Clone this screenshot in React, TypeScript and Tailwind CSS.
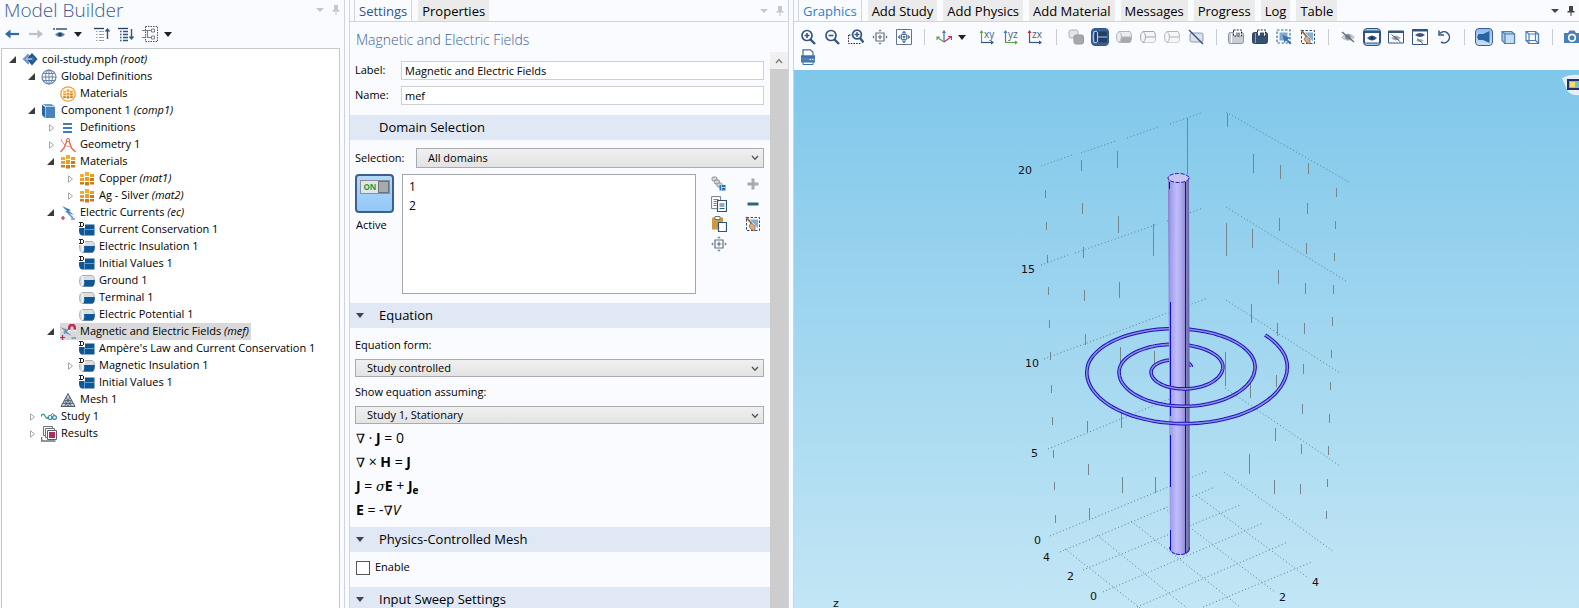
import React from "react";

type IconProps = { children: React.ReactNode; size?: number };

const Icon = ({ children, size = 16 }: IconProps) => (
  <svg width={size} height={size} viewBox="0 0 16 16" fill="none" className="shrink-0" aria-hidden="true">
    {children}
  </svg>
);

const BLUE = "#4a7fb8";
const NAVY = "#34557f";
const GREY = "#9a9fa6";

/* ---------- tree icons ---------- */

const RootIcon = () => (
  <Icon>
    <path d="M10 1 15.500 7 10 13.500 4.500 7Z" fill="#24568f" />
    <path d="M6 1.500 .500 7 6 12.500 8 10.500 4.500 7 8 3.500Z" fill="#6f9ccc" />
    <path d="M4.500 7h6" stroke="#fff" strokeWidth="1" />
    <path d="m10 4 3 3-3 3" fill="#3d73ad" />
  </Icon>
);

const GlobeIcon = () => (
  <Icon>
    <circle cx="8" cy="8" r="7" stroke="#6483ad" strokeWidth="1.2" />
    <ellipse cx="8" cy="8" rx="3.400" ry="7" stroke="#6483ad" />
    <path d="M1 8h14M8 1v14M2.200 4.500h11.600M2.200 11.500h11.600" stroke="#6483ad" />
  </Icon>
);

const Blocks = () => (
  <>
    <path d="M6 1h4v4H6zM1 3h4v3H1z" fill="#f5ad2d" />
    <path d="M11 3h4v3h-4zM1 7h4v3H1zM6 6h4v4H6z" fill="#ee9c22" />
    <path d="M11 7h4v3h-4zM6 11h4v3.500H6zM1 11h4v2.500H1zM11 11h4v2.500h-4z" fill="#cf7b1b" />
  </>
);

const MaterialsIcon = () => (
  <Icon>
    <Blocks />
  </Icon>
);

const GlobalMaterialsIcon = () => (
  <Icon>
    <circle cx="8" cy="8" r="7.200" stroke="#f0a02c" strokeWidth="1.300" />
    <g transform="translate(2.500 2.600) scale(.69)">
      <Blocks />
    </g>
  </Icon>
);

const ComponentIcon = () => (
  <Icon>
    <path d="M4.500 4H14v11H4.500z" fill="#4684bd" />
    <path d="M1 1.500 4 4v11l-3-3Z" fill="#2f659d" />
    <path d="M2 1h8.500L14 3.400H4.800Z" fill="#6ba0d0" />
  </Icon>
);

const DefinitionsIcon = () => (
  <Icon>
    <path d="M3 4h9M3 8h9M3 12h9" stroke="#3f7dbd" strokeWidth="2" />
  </Icon>
);

const GeometryIcon = () => (
  <Icon>
    <path d="m8 1-4 10-3.500 4M8 1l3.500 10 4 4" stroke="#de6a55" strokeWidth="1.400" />
    <path d="M1 2c2 6 6 8.500 10 7" stroke="#e58a78" />
    <circle cx="8" cy="3" r="1.500" stroke="#de6a55" fill="#fff" />
  </Icon>
);

const Bolt = () => (
  <>
    <path d="m2 1 9 4-2 1 5 4-9-3 2-1Z" fill="#3f82b8" />
    <path d="m8 8 5 5" stroke="#5c94bf" strokeWidth="1.500" />
    <path d="M1 13h4M3 11v4" stroke="#c0264c" strokeWidth="1.200" />
    <path d="M11 14h4" stroke="#3f82b8" strokeWidth="1.200" />
  </>
);

const CurrentsIcon = () => (
  <Icon>
    <Bolt />
  </Icon>
);

const MefIcon = () => (
  <Icon>
    <path d="m0 3 8 3-2 1 6 5-9-4 2-1Z" fill="#5c94bf" />
    <path d="m4 9.500 5-5" stroke="#5c94bf" strokeWidth="1.500" />
    <path d="M0 13.500h5M2.500 11v5" stroke="#c0264c" strokeWidth="1.200" />
    <path d="M11.500 14H16" stroke="#3f82b8" strokeWidth="1.200" />
    <path d="M9.200 6V3.800a2.800 2.800 0 0 1 5.600 0V6" stroke="#c5234c" strokeWidth="2.400" />
    <path d="M8 6.500h2.400M13.600 6.500H16" stroke="#fff" strokeWidth="1.400" />
  </Icon>
);

// "default node" badge in the upper left corner
const DMark = () => (
  <g shapeRendering="crispEdges">
    <path d="M0 0h6v6H0z" fill="#fff" />
    <path d="M0 0h4v1H2v3h2v1H0V4h1V1H0zM4 1h1v3H4z" fill="#222" />
  </g>
);

const DomainIcon = () => (
  <Icon>
    <path d="M3 2.500h12.500v11H2.500Q0 12.500 0 8t3-5.500Z" fill="#0d5796" />
    <path d="M5.500 3.500v10M5.500 7.500h10" stroke="#7fadd4" strokeWidth=".8" />
    <DMark />
  </Icon>
);

const BoundaryShape = () => (
  <>
    <path d="M3 2.500h10.500q2 1 2 5.500t-2 5.500H3Q.5 12.500 .5 8T3 2.500Z" fill="#dcdfe2" stroke="#9aa0a7" strokeWidth=".8" />
    <path d="M5 7h10.800q0 5-2 6.500H4.500Q6 10.500 5 7Z" fill="#0d5796" />
    <path d="M3 3Q5 8 3 13" stroke="#fff" />
  </>
);

const BoundaryIcon = () => (
  <Icon>
    <BoundaryShape />
  </Icon>
);

const BoundaryDefaultIcon = () => (
  <Icon>
    <BoundaryShape />
    <DMark />
  </Icon>
);

const MeshIcon = () => (
  <Icon>
    <path d="M8 1.500 15 14.500H1Z" fill="#c3ccd6" stroke="#4e5b6b" />
    <path d="m4.500 8.500 3.500 6 3.500-6ZM6 5l5.500 9.500M10 5l-5.500 9.500M3 11.500h10" stroke="#4e5b6b" strokeWidth=".8" />
  </Icon>
);

const StudyIcon = () => (
  <Icon>
    <path d="M0 7.500q2-4.500 4-.5t4 1.500" stroke="#2c9a9c" strokeWidth="1.300" />
    <circle cx="9" cy="8.500" r="2" stroke="#2c86a8" strokeWidth="1.200" />
    <circle cx="13.500" cy="8.500" r="1.900" stroke="#2c86a8" strokeWidth="1.200" />
    <path d="m9.500 6.500 2-2 2.500 2" stroke="#2c9a9c" />
  </Icon>
);

const ResultsIcon = () => (
  <Icon>
    <path d="M2.500.5h9v9h-9z" stroke="#6d7278" fill="#fff" />
    <path d="M4.500 2.500h9v9h-9z" stroke="#6d7278" fill="#fff" />
    <path d="M6.500 4.500h9v9h-9z" stroke="#5b6067" fill="#fff" />
    <path d="M8 6h6v6H8z" fill="#b02a62" />
    <path d="M.5 11v4h14" stroke="#6d7278" strokeWidth="1.600" />
  </Icon>
);

/* ---------- toolbar icons ---------- */

const BackIcon = () => (
  <Icon>
    <path d="M15 8H3" stroke="#2f6aa8" strokeWidth="2.200" />
    <path d="M6.500 3.500v9L1 8z" fill="#2f6aa8" />
  </Icon>
);

const ForwardIcon = () => (
  <Icon>
    <path d="M1 8h12" stroke="#bcc1c8" strokeWidth="2.200" />
    <path d="M9.500 3.500v9L15 8z" fill="#bcc1c8" />
  </Icon>
);

const ShowIcon = () => (
  <Icon>
    <path d="M1 3h2M4 3h11" stroke={NAVY} strokeWidth="1.600" />
    <path d="M3 8.500q5-5 10 0-5 5-10 0Z" fill="#5e7fa6" />
    <circle cx="8" cy="8.500" r="1.800" fill="#23405f" />
  </Icon>
);

const CollapseIcon = () => (
  <Icon>
    <path d="M0 2.500h10" stroke="#23405f" strokeWidth="1.300" />
    <path d="M2 5.500h1.500M5 5.500h5M2 8.500h1.500M5 8.500h5M2 11.500h1.500M5 11.500h5M2 14.500h1.500M5 14.500h5" stroke={GREY} />
    <path d="M13.500 13V3M11.500 5.500l2-2.500 2 2.500" stroke={NAVY} strokeWidth="1.400" />
  </Icon>
);

const ExpandIcon = () => (
  <Icon>
    <path d="M0 2.500h10" stroke="#23405f" strokeWidth="1.300" />
    <path d="M2 5.500h1.500M5 5.500h5M2 8.500h1.500M5 8.500h5M2 11.500h1.500M5 11.500h5M2 14.500h1.500M5 14.500h5" stroke={NAVY} strokeWidth="1.300" />
    <path d="M13.500 3v10M11.500 10.500l2 2.500 2-2.500" stroke={NAVY} strokeWidth="1.400" />
  </Icon>
);

const NodeTextIcon = () => (
  <Icon>
    <path d="M3.500.5h12v15h-12z" stroke="#555" strokeDasharray="1.500 1" />
    <path d="M0 4.500h9M5.500 4.500v7H9M0 11.500h3" stroke="#7b828a" strokeWidth="1.200" />
    <path d="M9.500 3h3v3h-3zM9.500 10h3v3h-3z" stroke="#7b828a" fill="#fff" />
  </Icon>
);

const Lens = ({ sign }: { sign: string }) => (
  <>
    <circle cx="7" cy="6.500" r="5" stroke={NAVY} strokeWidth="1.700" fill="#fff" />
    <path d={sign} stroke={NAVY} strokeWidth="1.600" />
    <path d="m10.500 10.500 4.500 4.500" stroke={NAVY} strokeWidth="2.400" />
  </>
);

const ZoomInIcon = () => (
  <Icon>
    <Lens sign="M4.500 6.500h5M7 4v5" />
  </Icon>
);

const ZoomOutIcon = () => (
  <Icon>
    <Lens sign="M4.500 6.500h5" />
  </Icon>
);

const ZoomBoxIcon = () => (
  <Icon>
    <path d="M1 6h4M.5 6v8.500h12" stroke="#222" strokeDasharray="1.500 1.200" />
    <circle cx="9" cy="5.500" r="4.400" stroke={NAVY} strokeWidth="1.700" fill="#fff" />
    <path d="M6.500 5.500h5M9 3v5" stroke={NAVY} strokeWidth="1.400" />
    <path d="m12 9 3.500 4.500" stroke={NAVY} strokeWidth="2.400" />
  </Icon>
);

const ZoomSelectedIcon = () => (
  <Icon>
    <path d="M4 4h8v8H4z" stroke="#63707f" strokeWidth="1.200" />
    <path d="M5.800 8h4.400M8 5.800v4.400" stroke="#63707f" strokeWidth="1.200" />
    <path d="m6.300 2.200 1.700-2 1.700 2zM6.300 13.800l1.700 2 1.700-2zM2.200 6.300l-2 1.700 2 1.700zM13.800 6.300l2 1.700-2 1.700z" fill="#63809f" />
  </Icon>
);

const ZoomExtentsIcon = () => (
  <Icon>
    <path d="M.5.5h15v15H.5z" stroke="#60758d" fill="#fff" />
    <path d="M5.500 5.500h5v5h-5z" stroke="#60758d" />
    <path d="M6.500 8h3M8 6.500v3" stroke={NAVY} />
    <path d="m5.500 4.500 2.500-3 2.500 3zM5.500 11.500l2.500 3 2.500-3zM4.500 5.500l-3 2.500 3 2.500zM11.500 5.500l3 2.500-3 2.500z" fill={BLUE} />
  </Icon>
);

const AxesIcon = () => (
  <Icon>
    <path d="M8 13V2" stroke="#3f7dbd" strokeWidth="1.300" />
    <path d="m6 4 2-3 2 3z" fill="#3f7dbd" />
    <path d="M8 13 1.500 8.500M1 11V8h3" stroke="#5ba34c" strokeWidth="1.200" />
    <path d="m8 13 7-5M12 7.500h3.500V11" stroke="#c8305c" strokeWidth="1.200" />
  </Icon>
);

type PlaneProps = { name: string; vertical: string; horizontal: string };

const PlaneIcon = ({ name, vertical, horizontal }: PlaneProps) => (
  <svg width="20" height="18" viewBox="0 0 20 18" fill="none" aria-hidden="true">
    <path d="M3.500 15V3" stroke={vertical} strokeWidth="1.200" />
    <path d="m1.500 5 2-3 2 3z" fill={vertical} />
    <path d="M3 14.500h12" stroke={horizontal} strokeWidth="1.200" />
    <path d="m13 12.500 3 2-3 2z" fill={horizontal} />
    <text x="6" y="10" fontSize="10" fill="#4c5f77">
      {name}
    </text>
  </svg>
);

type CylinderProps = { fill: string; lower: string; stroke: string };

const CylinderIcon = ({ fill, lower, stroke }: CylinderProps) => (
  <Icon>
    <path d="M3 2.500h11q1.500 1 1.500 5.500T14 13.500H3Q.5 12.500 .5 8T3 2.500Z" fill={fill} stroke={stroke} />
    <path d="M5 8h10.500q0 4-1.500 5.500H4.500Z" fill={lower} />
    <path d="M3 2.500Q5.500 4 5.500 8T3 13.500M5.500 8h10" stroke={stroke} />
  </Icon>
);

const ObjectsIcon = () => (
  <Icon>
    <rect x="1" y="1" width="9" height="8" rx="2" fill="#e4e6e9" stroke="#aeb2b8" />
    <rect x="6" y="6" width="9.500" height="9" rx="2" fill="#a6a9ad" stroke="#94989d" />
  </Icon>
);

const SelectedCylinderIcon = () => (
  <Icon>
    <path d="M0 0h16v16H0z" fill="#3a6096" />
    <path d="M2 2.500h13v11H2Q4 8 2 2.500Z" fill="#233f63" />
    <path d="M5.500 3v10M5.500 8H15M2 2.500h3M2 13.500h3M2 2.500Q.5 8 2 13.500" stroke="#a9cdf2" strokeWidth="1.200" />
  </Icon>
);

const HiddenCylinderIcon = () => (
  <Icon>
    <rect x="2" y="4" width="13" height="9" rx="2" fill="#dde2e8" stroke="#8c9bb0" />
    <path d="m1 1 14 14" stroke={NAVY} strokeWidth="1.400" />
  </Icon>
);

const SelectCylinderIcon = ({ dark }: { dark?: boolean }) => (
  <Icon>
    <rect x=".5" y="3.500" width="15" height="11" rx="2" fill={dark ? "#38506f" : "#c9ced5"} stroke={dark ? "#2b4160" : "#8b94a0"} />
    <path d="M3.500 4v10" stroke={dark ? "#8ea3bd" : "#fff"} />
    <path d="M5.500 1h8v6h-8z" fill="#fff" stroke="#222" strokeDasharray="2 1.200" />
    <path d="M8 3.500h4V7H8z" fill={dark ? "#38506f" : "#8c96a3"} />
  </Icon>
);

const SelectBoxIcon = () => (
  <Icon>
    <path d="M1 1h13v13H1z" stroke="#3d6b9f" strokeWidth="1.200" strokeDasharray="2.500 1.500" />
    <path d="M3.500 3.500h8v8h-8z" fill="#7fa9d3" />
    <path d="m6.500 6 8 3-3 1.200 4 4-1.500 1.300-4-4-1.500 2.500Z" fill="#3d74b0" />
  </Icon>
);

const ClearSelectionIcon = () => (
  <Icon>
    <path d="M1.500 1.500h13v13h-13z" stroke="#2d4d72" strokeDasharray="2.500 1.500" />
    <path d="M5 3.500h8v9z" fill="#7fb0dc" />
    <path d="m1 1 6 7" stroke="#8a6a3f" strokeWidth="1.800" />
    <path d="m6 7 4 3v5q-5-1-6-5Z" fill="#e0ad7d" stroke="#8a6a4f" strokeWidth=".8" />
  </Icon>
);

const HideIcon = () => (
  <Icon>
    <path d="M1 8.500q7-8 14 0-7 7-14 0Z" fill="#c3c8cf" />
    <circle cx="8" cy="8" r="2.800" fill="#7d8895" />
    <path d="m2 3 12 10" stroke="#5f6b7a" strokeWidth="1.300" />
  </Icon>
);

const WindowEyeIcon = ({ crossed }: { crossed?: boolean }) => (
  <Icon>
    <path d="M.5 2h15v12H.5z" fill="#fff" stroke={NAVY} />
    <path d="M0 3h16" stroke={NAVY} strokeWidth="2" />
    <path d="M3 9q5-5 10 0-5 5-10 0Z" fill={crossed ? "#aab2bc" : "#35587f"} />
    <circle cx="8" cy="9" r="1.600" fill={crossed ? "#7d8895" : "#16304d"} />
    {crossed && <path d="m3.500 5.500 9 7.500" stroke="#53606f" />}
  </Icon>
);

const WindowEyesIcon = () => (
  <Icon>
    <path d="M.5.5h15v15H.5z" fill="#fff" stroke={NAVY} />
    <path d="M0 1.500h16" stroke={NAVY} strokeWidth="2" />
    <path d="M3 6q5-4 10 0-5 4-10 0Z" fill="#35587f" />
    <path d="M4 11.500q4-3 8 0-4 3-8 0Z" fill="#aab2bc" />
    <path d="m5 9.500 6 5" stroke="#53606f" />
  </Icon>
);

const ResetIcon = () => (
  <Icon>
    <path d="M4 4.500a5.500 5.500 0 1 1 1 8.500" stroke={NAVY} strokeWidth="1.500" />
    <path d="M3 1.500v4.500h5" stroke={NAVY} strokeWidth="1.500" />
  </Icon>
);

const LightIcon = () => (
  <Icon>
    <path d="M13.500 2v12L7 11H2.500L1 8l1.500-3H7z" fill="#2b62a0" />
  </Icon>
);

const CubeIcon = ({ filled }: { filled?: boolean }) => (
  <Icon>
    <path d="M2 2.500h9.500l3 2.500v9.500H5L2 11.500Z" stroke="#4a7fb8" strokeWidth="1.200" fill={filled ? "#a9c6e3" : "#fff"} />
    <path d="M5 5h9.500v9.500H5zM2 2.500 5 5" stroke="#4a7fb8" strokeWidth="1.200" fill={filled ? "#c7dbee" : "none"} />
    {!filled && <path d="M2 11.500h9.500v-9M11.500 11.500l3 3" stroke="#4a7fb8" strokeWidth="1.200" />}
  </Icon>
);

const CameraIcon = () => (
  <Icon>
    <path d="M0 4h4l1.500-2.500h5L12 4h4v10H0z" fill="#4a7fb8" />
    <circle cx="8" cy="8.800" r="3.300" stroke="#fff" strokeWidth="1.600" />
  </Icon>
);

const PrintIcon = () => (
  <Icon>
    <path d="M3 7V.800h7.500L13 3.300V7" fill="#fff" stroke="#3e6fa8" strokeWidth="1.200" />
    <path d="M1 6.500h14v7H1z" fill="#4a7fb8" />
    <path d="M1 6.500h14v2H1z" fill="#3e6fa8" />
    <path d="M3 13h10v2.500H3z" fill="#fff" stroke="#3e6fa8" />
    <path d="M9.500 10.500h1.500M12 10.500h1.500" stroke="#fff" />
  </Icon>
);

/* ---------- selection buttons ---------- */

const CreateSelectionIcon = () => (
  <Icon>
    <rect x="1" y="1" width="5" height="4" rx="1.500" fill="#d5d7da" stroke="#858a91" />
    <rect x="3.500" y="4" width="5" height="4" rx="1.500" fill="#d5d7da" stroke="#858a91" />
    <rect x="6" y="7" width="5" height="4" rx="1.500" fill="#d5d7da" stroke="#858a91" />
    <path d="M8.500 9h6v5.500h-6z" fill="#2f6fb3" />
    <path d="M10.500 9v5.500M10.500 11.500h4" stroke="#a9cdf2" />
  </Icon>
);

const CopyIcon = () => (
  <Icon>
    <path d="M.6.600h9v12H.6z" fill="#fff" stroke="#777d85" />
    <path d="M2.500 3.500h5M2.500 5.500h3M2.500 7.500h3M2.500 9.500h3" stroke="#777d85" />
    <path d="M6.500 4.500h9v11h-9z" fill="#fff" stroke="#2d557c" strokeWidth="1.200" />
    <path d="M8.500 8h5M8.500 10h5M8.500 12.500h5" stroke="#2d557c" />
  </Icon>
);

const PasteIcon = () => (
  <Icon>
    <path d="M1 1.500h11v12H1z" fill="#cf9a3c" />
    <path d="M4 .5h5v3H4z" fill="#fff" stroke="#6d7278" />
    <path d="M7.500 6.500h8v9h-8z" fill="#fff" stroke="#2d557c" strokeWidth="1.200" />
  </Icon>
);

const PlusIcon = () => (
  <Icon>
    <path d="M2.500 8h11M8 2.500v11" stroke="#a5aab0" strokeWidth="3" />
  </Icon>
);

const MinusIcon = () => (
  <Icon>
    <path d="M2.500 8h11" stroke="#34607f" strokeWidth="3" />
  </Icon>
);

/* ---------- small controls ---------- */

const Caret = ({ className = "" }: { className?: string }) => (
  <button type="button" aria-label="More options" className={`flex h-5 w-3 shrink-0 items-center justify-center ${className}`}>
    <svg width="8" height="5" viewBox="0 0 8 5" aria-hidden="true">
      <path d="M0 0h8L4 5z" fill="#222" />
    </svg>
  </button>
);

const Separator = () => (
  <span className="flex w-4 shrink-0 justify-center">
    <span className="h-4 w-px bg-[#c9ced6]" />
  </span>
);

type ToolButtonProps = { label: string; children: React.ReactNode };

const ToolButton = ({ label, children }: ToolButtonProps) => (
  <button type="button" aria-label={label} className="flex h-5 w-6 shrink-0 items-center justify-center">
    {children}
  </button>
);

const PanelMenu = ({ color }: { color: string }) => (
  <div className="ml-auto flex shrink-0 items-center gap-2">
    <button type="button" aria-label="Panel menu">
      <svg width="8" height="4" viewBox="0 0 8 4" className="block" aria-hidden="true">
        <path d="M0 0h8L4 4z" fill={color} />
      </svg>
    </button>
    <button type="button" aria-label="Pin panel">
      <svg width="8" height="10" viewBox="0 0 8 10" className="block" aria-hidden="true">
        <path d="M2 0h4v5h1.500v1.500h-7V5H2zM3.500 6.500h1V10h-1z" fill={color} />
      </svg>
    </button>
  </div>
);

/* ---------- model builder ---------- */

type TreeNode = {
  level: number;
  icon: React.ComponentType;
  label: string;
  tag?: string;
  state?: "open" | "closed";
  selected?: boolean;
};

const treeNodes: TreeNode[] = [
  { level: 0, icon: RootIcon, label: "coil-study.mph", tag: "root", state: "open" },
  { level: 1, icon: GlobeIcon, label: "Global Definitions", state: "open" },
  { level: 2, icon: GlobalMaterialsIcon, label: "Materials" },
  { level: 1, icon: ComponentIcon, label: "Component 1", tag: "comp1", state: "open" },
  { level: 2, icon: DefinitionsIcon, label: "Definitions", state: "closed" },
  { level: 2, icon: GeometryIcon, label: "Geometry 1", state: "closed" },
  { level: 2, icon: MaterialsIcon, label: "Materials", state: "open" },
  { level: 3, icon: MaterialsIcon, label: "Copper", tag: "mat1", state: "closed" },
  { level: 3, icon: MaterialsIcon, label: "Ag - Silver", tag: "mat2", state: "closed" },
  { level: 2, icon: CurrentsIcon, label: "Electric Currents", tag: "ec", state: "open" },
  { level: 3, icon: DomainIcon, label: "Current Conservation 1" },
  { level: 3, icon: BoundaryDefaultIcon, label: "Electric Insulation 1" },
  { level: 3, icon: DomainIcon, label: "Initial Values 1" },
  { level: 3, icon: BoundaryIcon, label: "Ground 1" },
  { level: 3, icon: BoundaryIcon, label: "Terminal 1" },
  { level: 3, icon: BoundaryIcon, label: "Electric Potential 1" },
  { level: 2, icon: MefIcon, label: "Magnetic and Electric Fields", tag: "mef", state: "open", selected: true },
  { level: 3, icon: DomainIcon, label: "Ampère's Law and Current Conservation 1" },
  { level: 3, icon: BoundaryDefaultIcon, label: "Magnetic Insulation 1", state: "closed" },
  { level: 3, icon: DomainIcon, label: "Initial Values 1" },
  { level: 2, icon: MeshIcon, label: "Mesh 1" },
  { level: 1, icon: StudyIcon, label: "Study 1", state: "closed" },
  { level: 1, icon: ResultsIcon, label: "Results", state: "closed" },
];

const indents = ["pl-[5px]", "pl-[24px]", "pl-[43px]", "pl-[62px]"];

const TreeRow = ({ node }: { node: TreeNode }) => {
  const NodeIcon = node.icon;
  return (
    <li
      role="treeitem"
      aria-level={node.level + 1}
      aria-selected={!!node.selected}
      className={`flex h-[17px] items-center whitespace-nowrap ${indents[node.level]}`}
    >
      <span className="flex w-[15px] shrink-0 items-center">
        {node.state === "open" && (
          <svg width="7" height="7" viewBox="0 0 7 7" className="ml-0.5" aria-hidden="true">
            <path d="M7 0v7H0z" fill="#3c3c3c" />
          </svg>
        )}
        {node.state === "closed" && (
          <svg width="6" height="8" viewBox="0 0 6 8" className="ml-1" aria-hidden="true">
            <path d="M.5.8v6.400L4.500 4z" fill="#fff" stroke="#a6a6a6" />
          </svg>
        )}
      </span>
      <span className={`flex h-[17px] items-center gap-1 pr-0.5 ${node.selected ? "bg-[#d9d9db]" : ""}`}>
        <NodeIcon />
        <span>
          {node.label}
          {node.tag && <i> ({node.tag})</i>}
        </span>
      </span>
    </li>
  );
};

const ModelBuilder = () => (
  <aside className="flex min-w-0 flex-col overflow-hidden border-r border-[#cfd4de]">
    <div className="flex h-6 items-center pr-1 pb-1">
      <h1 className="pl-1 text-[19px] leading-5 font-light text-[#3f5b94]">Model Builder</h1>
      <PanelMenu color="#c3c6cc" />
    </div>
    <div className="flex h-6 items-start">
      <ToolButton label="Previous node"><BackIcon /></ToolButton>
      <ToolButton label="Next node"><ForwardIcon /></ToolButton>
      <ToolButton label="Show"><ShowIcon /></ToolButton>
      <Caret className="mr-1.5" />
      <ToolButton label="Collapse all"><CollapseIcon /></ToolButton>
      <ToolButton label="Expand all"><ExpandIcon /></ToolButton>
      <ToolButton label="Node text"><NodeTextIcon /></ToolButton>
      <Caret />
    </div>
    <ul role="tree" className="mr-1 ml-px flex-1 overflow-hidden border border-b-0 border-[#c4c7cc] bg-white pt-[2px] text-[11px]">
      {treeNodes.map((node, i) => (
        <TreeRow key={i} node={node} />
      ))}
    </ul>
  </aside>
);

/* ---------- settings ---------- */

type TabsProps = { items: string[]; activeColor: string; menuColor: string };

const Tabs = ({ items, activeColor, menuColor }: TabsProps) => (
  <div className="flex h-[22px] shrink-0 items-start gap-1.5 overflow-hidden border-b border-[#cfd4de] pr-1 pl-1 text-[13px] leading-[18px]">
    {items.map((item, i) => (
      <button
        key={item}
        type="button"
        className={
          i === 0
            ? `h-[22px] shrink-0 border-x border-[#cfd4de] bg-[#fafbff] px-1 ${activeColor}`
            : "h-[21px] shrink-0 bg-[#ebebeb] px-1 text-black"
        }
      >
        {item}
      </button>
    ))}
    <div className="ml-auto flex h-[22px] items-center">
      <PanelMenu color={menuColor} />
    </div>
  </div>
);

const SectionHeader = ({ title, arrow = true }: { title: string; arrow?: boolean }) => (
  <h3 className="flex h-[25px] shrink-0 items-center bg-[#dfe8f4] text-[13px]">
    <span className="flex w-[29px] pl-1.5">
      {arrow && (
        <svg width="8" height="5" viewBox="0 0 8 5" aria-hidden="true">
          <path d="M0 0h8L4 5z" fill="#3f4650" />
        </svg>
      )}
    </span>
    {title}
  </h3>
);

type DropDownProps = { id: string; value: string };

const DropDown = ({ id, value }: DropDownProps) => (
  <span className="relative flex h-5 flex-1">
    <select
      id={id}
      defaultValue={value}
      className="w-full appearance-none border border-[#a9abae] bg-linear-to-b from-[#f0f0f0] to-[#e3e3e3] pl-[11px] text-[11px] leading-4"
    >
      <option>{value}</option>
    </select>
    <svg width="8" height="6" viewBox="0 0 8 6" fill="none" className="pointer-events-none absolute top-[7px] right-[5px]" aria-hidden="true">
      <path d="m1 1 3 3.200L7 1" stroke="#555" strokeWidth="1.300" />
    </svg>
  </span>
);

const Nabla = () => <span className="font-['DejaVu_Serif',serif] text-[13px]">∇</span>;

const Equations = () => (
  <div className="flex flex-col pt-0.5 pl-1.5 text-sm leading-[23px]">
    <p><Nabla /> · <b>J</b> = 0</p>
    <p><Nabla /> × <b>H</b> = <b>J</b></p>
    <p>
      <b>J</b> = <i className="font-['DejaVu_Serif',serif] text-[13px]">σ</i><b>E</b> + <b>J<sub className="text-[10px]">e</sub></b>
    </p>
    <p><b>E</b> = -<Nabla /><i>V</i></p>
  </div>
);

const SelectionList = () => (
  <div className="mt-1.5 flex">
    <div className="flex w-[47px] shrink-0 flex-col items-start text-[11px]">
      <button
        type="button"
        aria-labelledby="active-label"
        aria-pressed="true"
        className="flex h-[39px] w-[39px] justify-center rounded-sm border-2 border-[#3e5f8c] bg-linear-to-b from-[#b5d8fb] to-[#92c8f8] pt-1"
      >
        <span className="flex h-[14px] w-[30px] items-center justify-between border border-[#8b9096] bg-[#e3e6e8] pl-[3px] text-[8px] font-bold text-[#229a4a]">
          ON
          <span className="h-3 w-[11px] border border-[#6d7278] bg-[#a8abae]" />
        </span>
      </button>
      <span id="active-label" className="mt-1 pl-px leading-4">Active</span>
    </div>
    <ul className="h-[120px] flex-1 border border-[#a3a6aa] bg-white pt-[2px] pl-1.5 text-xs leading-[19px]">
      <li>1</li>
      <li>2</li>
    </ul>
    <div className="ml-[11px] grid h-[80px] w-[57px] grid-cols-[34px_23px] grid-rows-4">
      <ToolButton label="Create selection"><CreateSelectionIcon /></ToolButton>
      <ToolButton label="Add to selection"><PlusIcon /></ToolButton>
      <ToolButton label="Copy selection"><CopyIcon /></ToolButton>
      <ToolButton label="Remove from selection"><MinusIcon /></ToolButton>
      <ToolButton label="Paste selection"><PasteIcon /></ToolButton>
      <ToolButton label="Clear selection"><ClearSelectionIcon /></ToolButton>
      <ToolButton label="Zoom to selection"><ZoomSelectedIcon /></ToolButton>
    </div>
  </div>
);

const Settings = () => (
  <section className="flex min-w-0 flex-col overflow-hidden border-x border-[#cfd4de]">
    <Tabs items={["Settings", "Properties"]} activeColor="text-[#2f528f]" menuColor="#c3c6cc" />
    <h2 className="h-[30px] shrink-0 pt-1.5 pl-1.5 text-sm leading-6 font-light text-[#3f6399]">Magnetic and Electric Fields</h2>
    <div className="flex min-h-0 flex-1">
      <div className="min-w-0 flex-1 overflow-hidden">
        <div className="grid grid-cols-[46px_1fr] items-center gap-y-[6px] pt-[9px] pr-1.5 pb-[10px] pl-[5px] text-[11px]">
          <label htmlFor="node-label">Label:</label>
          <input id="node-label" defaultValue="Magnetic and Electric Fields" className="h-[19px] border border-[#cdd0d5] bg-white px-[3px]" />
          <label htmlFor="node-name">Name:</label>
          <input id="node-name" defaultValue="mef" className="h-[19px] border border-[#cdd0d5] bg-white px-[3px]" />
        </div>
        <SectionHeader title="Domain Selection" arrow={false} />
        <div className="pt-2 pr-1.5 pb-[9px] pl-[5px]">
          <div className="flex items-center text-[11px]">
            <label htmlFor="selection" className="w-[61px] shrink-0">Selection:</label>
            <DropDown id="selection" value="All domains" />
          </div>
          <SelectionList />
        </div>
        <SectionHeader title="Equation" />
        <div className="flex flex-col pt-[7px] pr-1.5 pl-[5px] text-[11px]">
          <label htmlFor="equation-form" className="pb-1 leading-5">Equation form:</label>
          <DropDown id="equation-form" value="Study controlled" />
          <label htmlFor="equation-study" className="pt-[5px] pb-1 leading-5">Show equation assuming:</label>
          <DropDown id="equation-study" value="Study 1, Stationary" />
        </div>
        <div className="pb-[5px]">
          <Equations />
        </div>
        <SectionHeader title="Physics-Controlled Mesh" />
        <div className="flex h-[35px] items-center gap-[5px] pb-1 pl-1.5 text-[11px]">
          <input id="mesh-enable" type="checkbox" className="h-[14px] w-[14px] appearance-none border border-[#555] bg-white" />
          <label htmlFor="mesh-enable">Enable</label>
        </div>
        <SectionHeader title="Input Sweep Settings" />
      </div>
      <div className="flex w-[18px] shrink-0 flex-col bg-[#cdcdcd]">
        <button type="button" aria-label="Scroll up" className="flex h-[17px] items-center justify-center bg-[#f0f0f0]">
          <svg width="8" height="6" viewBox="0 0 8 6" fill="none" aria-hidden="true">
            <path d="m1 5 3-3.500L7 5" stroke="#7a7a7a" strokeWidth="1.300" />
          </svg>
        </button>
      </div>
    </div>
  </section>
);

/* ---------- graphics ---------- */

const graphicsTabs = ["Graphics", "Add Study", "Add Physics", "Add Material", "Messages", "Progress", "Log", "Table"];

const Pressed = ({ children, className }: { children: React.ReactNode; className: string }) => (
  <span className={`flex h-[18px] w-[18px] items-center justify-center rounded-sm border ${className}`}>{children}</span>
);

const GraphicsToolbar = () => (
  <div className="h-12 shrink-0 pt-[5px] pl-0.5">
    <div className="flex h-5 items-center overflow-hidden">
      <ToolButton label="Zoom in"><ZoomInIcon /></ToolButton>
      <ToolButton label="Zoom out"><ZoomOutIcon /></ToolButton>
      <ToolButton label="Zoom box"><ZoomBoxIcon /></ToolButton>
      <ToolButton label="Zoom to selection"><ZoomSelectedIcon /></ToolButton>
      <ToolButton label="Zoom extents"><ZoomExtentsIcon /></ToolButton>
      <Separator />
      <ToolButton label="Default view"><AxesIcon /></ToolButton>
      <Caret className="mr-2" />
      <ToolButton label="XY view"><PlaneIcon name="xy" vertical="#5ba34c" horizontal={NAVY} /></ToolButton>
      <ToolButton label="YZ view"><PlaneIcon name="yz" vertical="#3f7dbd" horizontal="#5ba34c" /></ToolButton>
      <ToolButton label="ZX view"><PlaneIcon name="zx" vertical="#b02b50" horizontal={NAVY} /></ToolButton>
      <Separator />
      <ToolButton label="Select objects"><ObjectsIcon /></ToolButton>
      <ToolButton label="Select domains">
        <Pressed className="border-[#2f5486] bg-[#5e8cc4]"><SelectedCylinderIcon /></Pressed>
      </ToolButton>
      <ToolButton label="Select boundaries"><CylinderIcon fill="#ececee" lower="#a6a9ad" stroke="#b1b5ba" /></ToolButton>
      <ToolButton label="Select edges"><CylinderIcon fill="#f5f6f8" lower="#f5f6f8" stroke="#a3a7ad" /></ToolButton>
      <ToolButton label="Select points"><CylinderIcon fill="#f5f6f8" lower="#f5f6f8" stroke="#b1b5ba" /></ToolButton>
      <ToolButton label="No selection"><HiddenCylinderIcon /></ToolButton>
      <Separator />
      <ToolButton label="Select box"><SelectCylinderIcon /></ToolButton>
      <ToolButton label="Deselect box"><SelectCylinderIcon dark /></ToolButton>
      <ToolButton label="Select all"><SelectBoxIcon /></ToolButton>
      <ToolButton label="Clear selection"><ClearSelectionIcon /></ToolButton>
      <Separator />
      <ToolButton label="Hide"><HideIcon /></ToolButton>
      <ToolButton label="View unhidden">
        <Pressed className="border-[#2f5486] bg-[#a9cdf2]"><WindowEyeIcon /></Pressed>
      </ToolButton>
      <ToolButton label="View hidden"><WindowEyeIcon crossed /></ToolButton>
      <ToolButton label="View all"><WindowEyesIcon /></ToolButton>
      <ToolButton label="Reset hiding"><ResetIcon /></ToolButton>
      <Separator />
      <ToolButton label="Scene light">
        <Pressed className="border-[#3e5f8c] bg-linear-to-b from-[#8fbdf0] to-[#c5e0fb]"><LightIcon /></Pressed>
      </ToolButton>
      <ToolButton label="Transparency"><CubeIcon filled /></ToolButton>
      <ToolButton label="Wireframe"><CubeIcon /></ToolButton>
      <Separator />
      <ToolButton label="Image snapshot"><CameraIcon /></ToolButton>
    </div>
    <ToolButton label="Print"><PrintIcon /></ToolButton>
  </div>
);

// x1, y1, x2, y2
const gridLines = [
  [1041, 166, 1072, 155], [1081, 153, 1116, 141], [1127, 138, 1158, 127], [1170, 124, 1201, 113],
  [1226, 112, 1349, 182],
  [1041, 265, 1068, 255], [1075, 253, 1158, 224], [1167, 221, 1203, 208],
  [1226, 207, 1346, 281],
  [1044, 359, 1208, 298],
  [1226, 300, 1340, 373],
  [1048, 449, 1172, 398],
  [1225, 388, 1340, 466],
  [1050, 536, 1207, 471],
  [1224, 472, 1334, 552],
  [1060, 552, 1215, 487], [1083, 570, 1240, 505], [1103, 592, 1263, 523], [1137, 607, 1288, 542], [1203, 607, 1312, 562],
  [1065, 549, 1140, 608], [1097, 535, 1187, 608], [1131, 521, 1240, 607], [1164, 508, 1275, 592], [1196, 495, 1307, 577],
];

// x, y1, y2
const ticks = [
  [1081, 160, 171], [1117, 151, 168], [1187, 118, 174], [1227, 113, 127], [1253, 154, 173], [1280, 165, 179],
  [1308, 163, 174], [1336, 188, 197], [1045, 190, 198], [1082, 203, 214], [1118, 216, 233], [1153, 224, 256],
  [1226, 223, 256], [1252, 229, 248], [1279, 218, 231], [1307, 203, 214], [1335, 221, 229], [1046, 222, 230],
  [1083, 247, 258], [1306, 243, 254], [1334, 253, 261], [1047, 255, 263], [1048, 287, 295], [1084, 290, 301],
  [1119, 282, 298], [1278, 270, 284], [1305, 283, 294], [1333, 285, 294], [1049, 320, 328], [1251, 304, 323],
  [1277, 323, 336], [1304, 323, 334], [1332, 317, 326], [1085, 334, 345], [1120, 347, 363], [1154, 351, 366],
  [1225, 352, 386], [1331, 350, 358], [1303, 364, 374], [1276, 375, 387], [1250, 379, 398], [1050, 352, 360],
  [1051, 385, 393], [1052, 417, 425], [1053, 450, 458], [1054, 482, 490], [1055, 515, 523], [1087, 421, 432],
  [1121, 412, 428], [1088, 464, 475], [1089, 508, 520], [1122, 477, 493], [1155, 477, 493], [1249, 454, 474],
  [1275, 428, 441], [1274, 480, 494], [1302, 404, 414], [1301, 444, 454], [1300, 484, 494], [1330, 382, 390],
  [1329, 414, 423], [1328, 446, 455], [1327, 479, 487], [1326, 511, 519],
];

const axisLabels: [number, number, string][] = [
  [1018, 174, "20"], [1021, 273, "15"], [1025, 367, "10"], [1031, 457, "5"], [1034, 544, "0"],
  [1043, 561, "4"], [1067, 580, "2"], [1090, 600, "0"], [1312, 586, "4"], [1279, 601, "2"], [833, 607, "z"],
];

// Archimedean spiral seen in perspective, turns counted anticlockwise from the right.
const spiral = (from: number, to: number) => {
  const points: string[] = [];
  for (let turn = from; turn <= to + 0.0001; turn += 0.01) {
    const angle = turn * Math.PI * 2;
    const radius = 11.3 + 32.3 * turn;
    const up = Math.sin(angle);
    const x = 1179 + radius * Math.cos(angle);
    const y = 369.5 - radius * up * (up > 0 ? 0.485 : 0.54);
    points.push(`${x.toFixed(1)},${y.toFixed(1)}`);
  }
  return points.join(" ");
};

const Wire = ({ from, to }: { from: number; to: number }) => (
  <g fill="none">
    <polyline points={spiral(from, to)} stroke="#1a12c8" strokeWidth="3.600" />
    <polyline points={spiral(from, to)} stroke="#8f8cd8" strokeWidth="1.600" />
  </g>
);

const Plot = () => (
  <svg
    viewBox="794 70 785 538"
    preserveAspectRatio="xMidYMid slice"
    className="block h-full w-full font-['DejaVu_Sans',sans-serif]"
    role="img"
    aria-label="Coil geometry"
  >
    <defs>
      <linearGradient id="rod" x1="0" x2="1" y1="0" y2="0">
        <stop offset="0" stopColor="#7f7ac8" />
        <stop offset=".12" stopColor="#a39dee" />
        <stop offset=".4" stopColor="#c1bdfa" />
        <stop offset=".6" stopColor="#aeaaf0" />
        <stop offset=".8" stopColor="#8c88cc" />
        <stop offset="1" stopColor="#5d5b98" />
      </linearGradient>
    </defs>
    <g stroke="#5f7f8c" strokeDasharray="1 2.500">
      {gridLines.map(([x1, y1, x2, y2], i) => (
        <line key={i} x1={x1} y1={y1} x2={x2} y2={y2} />
      ))}
    </g>
    <g fill="#76868c">
      {ticks.map(([x, y1, y2], i) => (
        <rect key={i} x={x} y={y1} width="1" height={y2 - y1} />
      ))}
    </g>
    <Wire from={0.06} to={0.5} />
    <Wire from={1} to={1.5} />
    <Wire from={2} to={2.5} />
    <Wire from={3} to={3.11} />
    <path d="M1168 178h21l1 372q-2 5-10 5t-10-5Z" fill="url(#rod)" />
    <path d="M1185.500 182v371M1169.500 182v7M1170.500 302v114M1170.500 435v52M1170.500 530v20" stroke="#120ac4" />
    <path d="M1169.500 547q1 7 10 7.500t10-7" stroke="#120ac4" strokeDasharray="4 1" fill="none" />
    <ellipse cx="1178.500" cy="178" rx="10.500" ry="4.500" fill="#c9c3f0" stroke="#2018c4" strokeDasharray="4 1.500" />
    <Wire from={0.5} to={1} />
    <Wire from={1.5} to={2} />
    <Wire from={2.5} to={3} />
    <g fill="#111" fontSize="11">
      {axisLabels.map(([x, y, text], i) => (
        <text key={i} x={x} y={y}>
          {text}
        </text>
      ))}
    </g>
    <g>
      <path d="M1562 78q8-4 17-3v20q-9 1-12-5Z" fill="#e9eef5" />
      <path d="M1567 79h12v11h-12z" fill="#1c2f78" />
      <path d="M1569 81h10v7h-10z" fill="#7fc0c8" />
      <path d="M1570 82h5v5h-5z" fill="#f1e05a" />
    </g>
  </svg>
);

const Graphics = () => (
  <main className="flex min-w-0 flex-col overflow-hidden border-l border-[#cfd4de]">
    <Tabs items={graphicsTabs} activeColor="text-[#2683d9]" menuColor="#444" />
    <GraphicsToolbar />
    <div className="min-h-0 flex-1 bg-linear-to-b from-[#7fc7ea] to-[#c2e6f5]">
      <Plot />
    </div>
  </main>
);

const App = () => {
  return (
    <div className="grid h-screen grid-cols-[345fr_440fr_786fr] grid-rows-[minmax(0,1fr)] gap-1 overflow-hidden bg-[#fafbff] font-['Open_Sans','Noto_Sans',sans-serif] text-black">
      <ModelBuilder />
      <Settings />
      <Graphics />
    </div>
  );
};

export default App;
